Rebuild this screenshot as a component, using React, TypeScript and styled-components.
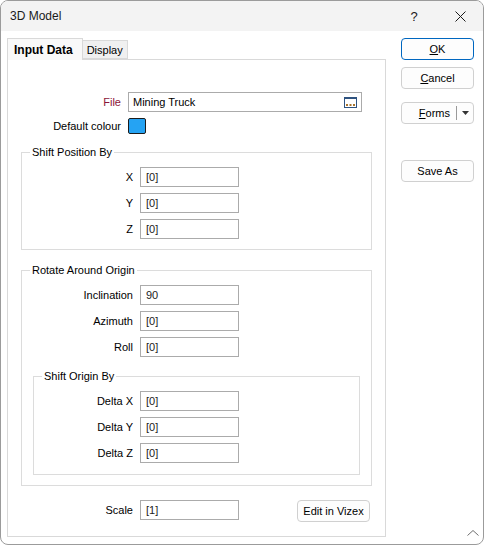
import styled, { createGlobalStyle } from 'styled-components';

const GlobalStyle = createGlobalStyle`
  html, body {
    margin: 0;
    padding: 0;
    background: #ffffff;
  }
  * {
    box-sizing: border-box;
  }
`;

const BrowseIcon = () => (
  <svg width="13" height="11" viewBox="0 0 13 11">
    <rect x="0.5" y="0.5" width="12" height="10" fill="#fff" stroke="#2f5380" />
    <rect x="0" y="0" width="13" height="2" fill="#2f5380" />
    <rect x="2" y="7" width="2" height="2" fill="#a8742c" />
    <rect x="5.5" y="7" width="2" height="2" fill="#a8742c" />
    <rect x="9" y="7" width="2" height="2" fill="#a8742c" />
  </svg>
);

const CloseIcon = () => (
  <svg width="11" height="11" viewBox="0 0 11 11">
    <path d="M0.5 0.5 L10.5 10.5 M10.5 0.5 L0.5 10.5" stroke="#1a1a1a" strokeWidth="1" fill="none" />
  </svg>
);

const App = () => {
  return (
    <>
      <GlobalStyle />
      <Window>
        <TitleBar>
          <Title>3D Model</Title>
          <TitleButton>?</TitleButton>
          <TitleButton>
            <CloseIcon />
          </TitleButton>
        </TitleBar>

        <Body>
          <LeftColumn>
            <TabBar>
              <Tab active>Input Data</Tab>
              <Tab>Display</Tab>
            </TabBar>
            <Panel>
              <Row labelWidth={100}>
                <Label mandatory>File</Label>
                <FileBox>
                  <FileInput defaultValue="Mining Truck" />
                  <BrowseIcon />
                </FileBox>
              </Row>
              <Row labelWidth={100} style={{ marginTop: 6 }}>
                <Label>Default colour</Label>
                <Swatch />
              </Row>

              <Group top={18}>
                <Caption>Shift Position By</Caption>
                <Rows>
                  <Row labelWidth={111}>
                    <Label>X</Label>
                    <Field defaultValue="[0]" />
                  </Row>
                  <Row labelWidth={111}>
                    <Label>Y</Label>
                    <Field defaultValue="[0]" />
                  </Row>
                  <Row labelWidth={111}>
                    <Label>Z</Label>
                    <Field defaultValue="[0]" />
                  </Row>
                </Rows>
              </Group>

              <Group top={20}>
                <Caption>Rotate Around Origin</Caption>
                <Rows>
                  <Row labelWidth={111}>
                    <Label>Inclination</Label>
                    <Field defaultValue="90" />
                  </Row>
                  <Row labelWidth={111}>
                    <Label>Azimuth</Label>
                    <Field defaultValue="[0]" />
                  </Row>
                  <Row labelWidth={111}>
                    <Label>Roll</Label>
                    <Field defaultValue="[0]" />
                  </Row>
                </Rows>
                <NestedGroup top={19}>
                  <Caption>Shift Origin By</Caption>
                  <Rows>
                    <Row labelWidth={99}>
                      <Label>Delta X</Label>
                      <Field defaultValue="[0]" />
                    </Row>
                    <Row labelWidth={99}>
                      <Label>Delta Y</Label>
                      <Field defaultValue="[0]" />
                    </Row>
                    <Row labelWidth={99}>
                      <Label>Delta Z</Label>
                      <Field defaultValue="[0]" />
                    </Row>
                  </Rows>
                </NestedGroup>
              </Group>

              <ScaleRow>
                <Row labelWidth={112}>
                  <Label>Scale</Label>
                  <Field defaultValue="[1]" />
                </Row>
                <VizexButton>Edit in Vizex</VizexButton>
              </ScaleRow>
            </Panel>
          </LeftColumn>

          <RightColumn>
            <Button primary>
              <u>O</u>K
            </Button>
            <Button style={{ marginTop: 7 }}>
              <u>C</u>ancel
            </Button>
            <SplitButton>
              <SplitMain>
                <u>F</u>orms
              </SplitMain>
              <SplitArrow>
                <svg width="7" height="4" viewBox="0 0 7 4">
                  <path d="M0 0 L7 0 L3.5 4 Z" fill="#333" />
                </svg>
              </SplitArrow>
            </SplitButton>
            <Button style={{ marginTop: 36 }}>Save As</Button>
          </RightColumn>
        </Body>

        <Grip>
          <svg width="12" height="6" viewBox="0 0 12 6">
            <path d="M0.5 5.5 L6 0.5 L11.5 5.5" stroke="#6e6e6e" strokeWidth="1" fill="none" />
          </svg>
        </Grip>
      </Window>
    </>
  );
};

const Window = styled.div`
  position: relative;
  width: 484px;
  height: 545px;
  border: 1px solid #9b9b9b;
  border-radius: 8px;
  overflow: hidden;
  background: #ffffff;
  display: flex;
  flex-direction: column;
  font-family: "Liberation Sans", Arial, sans-serif;
  font-size: 11px;
  color: #000;
`;

const TitleBar = styled.div`
  height: 30px;
  flex: none;
  display: flex;
  align-items: center;
  background: #f3f3f3;
`;

const Title = styled.div`
  flex: 1;
  padding-left: 9px;
  font-size: 12px;
  color: #1a1a1a;
`;

const TitleButton = styled.div`
  width: 46px;
  height: 30px;
  display: flex;
  align-items: center;
  justify-content: center;
  font-size: 13px;
  color: #1a1a1a;
`;

const Body = styled.div`
  flex: 1;
  display: flex;
  padding: 7px 0 7px 6px;
  min-height: 0;
`;

const LeftColumn = styled.div`
  width: 379px;
  display: flex;
  flex-direction: column;
`;

const TabBar = styled.div`
  height: 21px;
  display: flex;
  align-items: flex-end;
  position: relative;
  z-index: 1;
`;

const Tab = styled.div<{ active?: boolean }>`
  height: ${(p) => (p.active ? '22px' : '19px')};
  margin-bottom: ${(p) => (p.active ? '-1px' : '0')};
  padding: ${(p) => (p.active ? '0 9px 0 6px' : '0 4px')};
  display: flex;
  align-items: center;
  border: 1px solid #d9d9d9;
  border-bottom: ${(p) => (p.active ? 'none' : '1px solid #d9d9d9')};
  border-left: ${(p) => (p.active ? '1px solid #d9d9d9' : 'none')};
  background: ${(p) => (p.active ? '#f9f9f9' : '#f0f0f0')};
  font-weight: ${(p) => (p.active ? 'bold' : 'normal')};
  font-size: ${(p) => (p.active ? '12px' : '11px')};
  padding-top: ${(p) => (p.active ? '0' : '1px')};
`;

const Panel = styled.div`
  flex: 1;
  border: 1px solid #d9d9d9;
  background: #ffffff;
  padding: 32px 13px 0 13px;
  display: flex;
  flex-direction: column;
`;

const Row = styled.div<{ labelWidth: number }>`
  display: grid;
  grid-template-columns: ${(p) => p.labelWidth}px auto;
  column-gap: 7px;
  align-items: center;
  justify-content: start;
`;

const Label = styled.div<{ mandatory?: boolean }>`
  text-align: right;
  white-space: nowrap;
  color: ${(p) => (p.mandatory ? '#8b1538' : '#000')};
`;

const Field = styled.input`
  width: 99px;
  height: 20px;
  border: 1px solid #ababab;
  padding: 0 5px;
  font-family: "Liberation Sans", Arial, sans-serif;
  font-size: 11px;
  color: #222;
  background: #fff;
  outline: none;
`;

const FileBox = styled.div`
  width: 234px;
  height: 20px;
  border: 1px solid #ababab;
  display: flex;
  align-items: center;
  padding: 0 4px 0 0;
`;

const FileInput = styled.input`
  flex: 1;
  min-width: 0;
  border: none;
  padding: 0 4px;
  font-family: "Liberation Sans", Arial, sans-serif;
  font-size: 11px;
  color: #000;
  outline: none;
  background: transparent;
`;

const Swatch = styled.div`
  width: 18px;
  height: 16px;
  border: 1px solid #1c1c1c;
  border-radius: 2px;
  background: #25a3f3;
`;

const Group = styled.div<{ top: number }>`
  margin-top: ${(p) => p.top}px;
  border: 1px solid #dcdcdc;
  padding: 0 0 10px 0;
  display: flex;
  flex-direction: column;
`;

const NestedGroup = styled(Group)`
  margin-left: 11px;
  margin-right: 11px;
  padding-bottom: 11px;
`;

const Caption = styled.div`
  align-self: flex-start;
  margin: -8px 0 0 8px;
  padding: 0 2px;
  line-height: 14px;
  height: 14px;
  background: #fff;
  white-space: nowrap;
`;

const Rows = styled.div`
  margin-top: 8px;
  display: flex;
  flex-direction: column;
  gap: 6px;
`;

const ScaleRow = styled.div`
  margin-top: 14px;
  display: flex;
  align-items: flex-start;
  justify-content: space-between;
  padding-right: 2px;
`;

const VizexButton = styled.div`
  width: 73px;
  height: 22px;
  border: 1px solid #d0d0d0;
  border-radius: 4px;
  background: #fdfdfd;
  display: flex;
  align-items: center;
  justify-content: center;
  white-space: nowrap;
`;

const RightColumn = styled.div`
  margin-left: 15px;
  width: 73px;
  display: flex;
  flex-direction: column;
`;

const Button = styled.div<{ primary?: boolean }>`
  height: 22px;
  border: 1px solid ${(p) => (p.primary ? '#0067c0' : '#d0d0d0')};
  border-radius: 4px;
  background: #fdfdfd;
  display: flex;
  align-items: center;
  justify-content: center;
`;

const SplitButton = styled.div`
  margin-top: 13px;
  height: 22px;
  border: 1px solid #d0d0d0;
  border-radius: 4px;
  background: #fdfdfd;
  display: flex;
  align-items: center;
`;

const SplitMain = styled.div`
  flex: 1;
  height: 100%;
  display: flex;
  align-items: center;
  justify-content: flex-end;
  padding-right: 6px;
  border-right: 1px solid #9a9a9a;
  height: 14px;
`;

const SplitArrow = styled.div`
  width: 16px;
  display: flex;
  align-items: center;
  justify-content: center;
`;

const Grip = styled.div`
  position: absolute;
  right: 4px;
  bottom: 8px;
  line-height: 0;
`;

export default App;
